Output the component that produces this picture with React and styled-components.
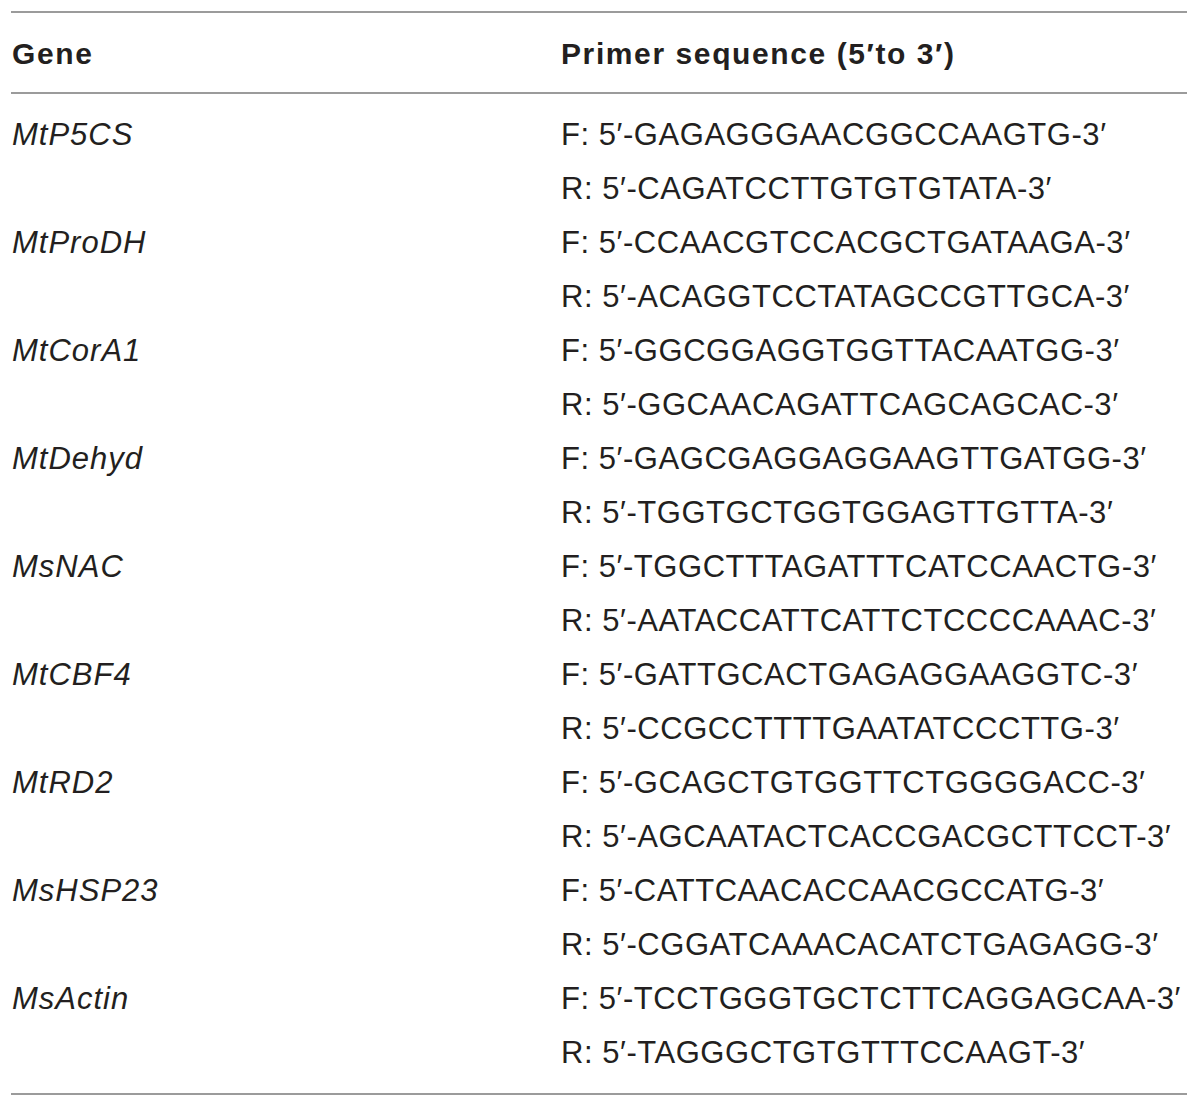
import React from "react";
import styled, { createGlobalStyle } from "styled-components";

const Global = createGlobalStyle`
  html, body { margin: 0; padding: 0; background: #fff; }
  body { font-family: "Liberation Sans", Arial, sans-serif; color: #231f20; }
`;

const Table = styled.div`
  margin: 11px 13px 0 11px;
  border-top: 2px solid #9b9b9b;
  border-bottom: 2px solid #9b9b9b;
`;

const HeaderRow = styled.div`
  display: grid;
  grid-template-columns: 549px 1fr;
  height: 79px;
  align-items: center;
  border-bottom: 2px solid #9b9b9b;
  padding-left: 1px;
`;

const HeadCell = styled.div`
  font-weight: bold;
  font-size: 30px;
  letter-spacing: 1.6px;
  padding-top: 2px;
`;

const Body = styled.div`
  padding: 14px 0 13px;
`;

const Group = styled.div`
  display: grid;
  grid-template-columns: 549px 1fr;
  padding-left: 1px;
`;

const GeneCell = styled.div`
  font-style: italic;
  font-size: 31px;
  line-height: 54px;
  letter-spacing: 1px;
`;

const Seqs = styled.div`
  display: flex;
  flex-direction: column;
`;

const Seq = styled.div`
  font-size: 31px;
  line-height: 54px;
  white-space: nowrap;
  letter-spacing: 0.55px;
`;

const data = [
  ["MtP5CS", "GAGAGGGAACGGCCAAGTG", "CAGATCCTTGTGTGTATA"],
  ["MtProDH", "CCAACGTCCACGCTGATAAGA", "ACAGGTCCTATAGCCGTTGCA"],
  ["MtCorA1", "GGCGGAGGTGGTTACAATGG", "GGCAACAGATTCAGCAGCAC"],
  ["MtDehyd", "GAGCGAGGAGGAAGTTGATGG", "TGGTGCTGGTGGAGTTGTTA"],
  ["MsNAC", "TGGCTTTAGATTTCATCCAACTG", "AATACCATTCATTCTCCCCAAAC"],
  ["MtCBF4", "GATTGCACTGAGAGGAAGGTC", "CCGCCTTTTGAATATCCCTTG"],
  ["MtRD2", "GCAGCTGTGGTTCTGGGGACC", "AGCAATACTCACCGACGCTTCCT"],
  ["MsHSP23", "CATTCAACACCAACGCCATG", "CGGATCAAACACATCTGAGAGG"],
  ["MsActin", "TCCTGGGTGCTCTTCAGGAGCAA", "TAGGGCTGTGTTTCCAAGT"],
];

export default function App() {
  return (
    <>
      <Global />
      <Table>
        <HeaderRow>
          <HeadCell>Gene</HeadCell>
          <HeadCell>Primer sequence (5′to 3′)</HeadCell>
        </HeaderRow>
        <Body>
          {data.map(([gene, f, r]) => (
            <Group key={gene}>
              <GeneCell>{gene}</GeneCell>
              <Seqs>
                <Seq>F: 5′-{f}-3′</Seq>
                <Seq>R: 5′-{r}-3′</Seq>
              </Seqs>
            </Group>
          ))}
        </Body>
      </Table>
    </>
  );
}
